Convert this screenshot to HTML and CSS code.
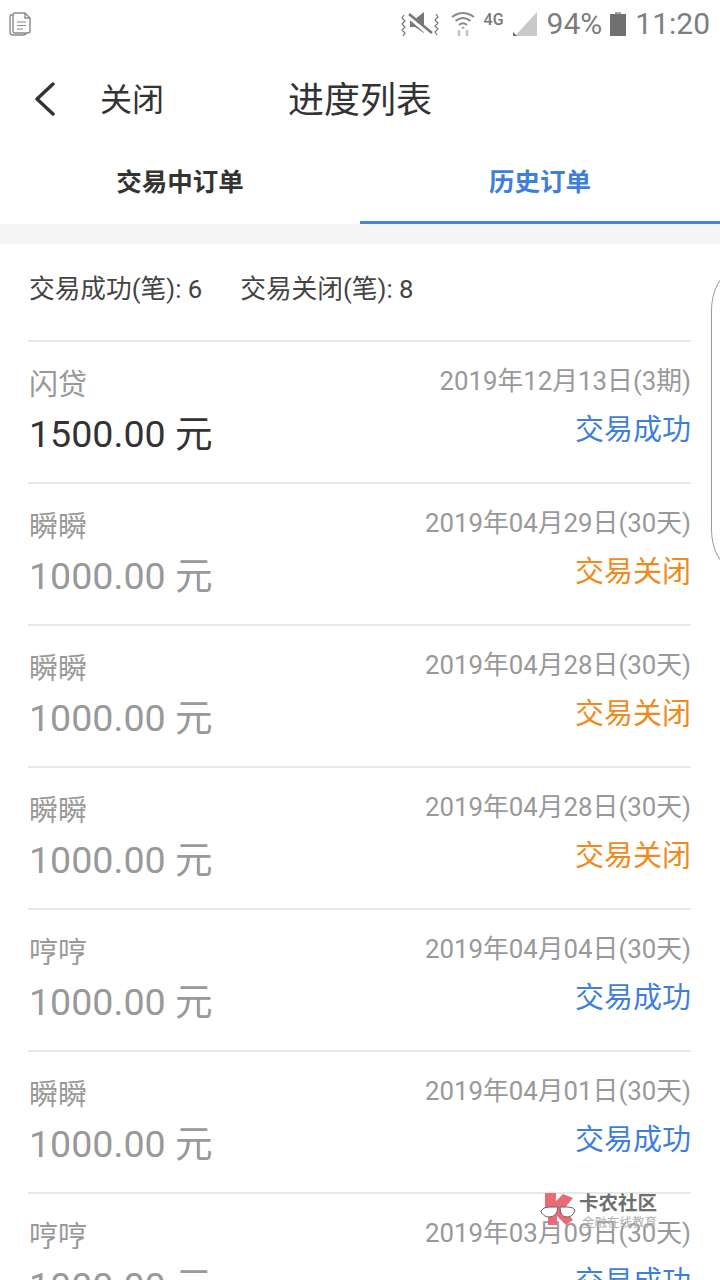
FILE: index.html
```html
<!DOCTYPE html>
<html lang="zh-CN">
<head>
    <meta charset="UTF-8">
    <meta name="viewport" content="width=device-width, initial-scale=1.0">
    <title>进度列表</title>
    <link rel="stylesheet" href="styles.css">
</head>
<body>
    <!-- Status bar -->
    <div class="status-bar">
        <svg class="doc-icon" width="26" height="28" viewBox="0 0 26 28" fill="none" stroke="#8a8a8a" stroke-width="1.4">
            <path d="M5 5 H3.5 Q2 5 2 6.5 V22 Q2 25 5 25 H15 Q18 25 18 23"/>
            <path d="M7 3 H17 L22 8 V21 Q22 23 20 23 H7 Q5 23 5 21 V5 Q5 3 7 3 Z" fill="#fff"/>
            <path d="M17 3 V8 H22"/>
            <path d="M9 12 H18 M9 15.5 H18 M9 19 H15" stroke-width="1"/>
        </svg>
        <div class="status-right">
            <svg width="38" height="26" viewBox="0 0 38 26" fill="none">
                <path d="M3 4 L1 7 L4 10 L1 13 L4 16 L1 19 L4 22 L2 25 M35 3 L37 6 L34 9 L37 12 L34 15 L37 18 L34 21 L36 24" stroke="#777" stroke-width="1.2"/>
                <path d="M9 8 H14 L23 1 V22 L14 16 H9 Z" fill="#777"/>
                <path d="M7 4 L30 24" stroke="#fff" stroke-width="5"/>
                <path d="M8 3 L31 22" stroke="#777" stroke-width="2.6"/>
            </svg>
            <svg class="wifi" width="24" height="26" viewBox="0 0 24 26" fill="none" stroke="#8a8a8a" stroke-width="2">
                <path d="M1 6 Q12 -2 23 6 M4.500 10 Q12 4 19.500 10 M8 14 Q12 10.500 16 14"/>
                <path d="M12 15.500 L14 17.500 H10 Z" fill="#8a8a8a" stroke="none"/>
                <path d="M8 19 V25 M16 25 V19" stroke="#c4c4c4" stroke-width="2.500"/>
            </svg>
            <span class="net-label">4G</span>
            <svg class="signal" width="26" height="26" viewBox="0 0 26 26">
                <path d="M25 1 V25 H3 Z" fill="#c9c9c9"/>
                <path d="M1 21 L5 25 H1 Z" fill="#666"/>
            </svg>
            <span class="status-text">94%</span>
            <svg class="battery" width="16" height="26" viewBox="0 0 16 26">
                <path d="M5 1 H11 V3 H5 Z" fill="#a8a8a8"/>
                <path d="M0 3 H16 V25 H0 Z" fill="#707070"/>
            </svg>
            <span class="status-text time">11:20</span>
        </div>
    </div>

    <!-- Nav -->
    <header class="nav-bar">
        <svg class="back-icon" width="22" height="34" viewBox="0 0 22 34" fill="none" stroke="#333" stroke-width="3.400" stroke-linecap="round" stroke-linejoin="round">
            <path d="M19 2 L3 17 L19 32"/>
        </svg>
        <span class="nav-close">关闭</span>
        <h1 class="nav-title">进度列表</h1>
    </header>

    <!-- Tabs -->
    <div class="tabs">
        <div class="tab">交易中订单</div>
        <div class="tab active">历史订单</div>
    </div>
    <div class="band"></div>

    <!-- List -->
    <main class="content">
        <div class="summary">
            <span>交易成功(笔): 6</span>
            <span>交易关闭(笔): 8</span>
        </div>

        <div class="order highlight">
            <div class="order-line"><span class="order-name">闪贷</span><span class="order-date">2019年12月13日(3期)</span></div>
            <div class="order-line"><span class="order-amount">1500.00 元</span><span class="order-status ok">交易成功</span></div>
        </div>
        <div class="order">
            <div class="order-line"><span class="order-name">瞬瞬</span><span class="order-date">2019年04月29日(30天)</span></div>
            <div class="order-line"><span class="order-amount">1000.00 元</span><span class="order-status closed">交易关闭</span></div>
        </div>
        <div class="order">
            <div class="order-line"><span class="order-name">瞬瞬</span><span class="order-date">2019年04月28日(30天)</span></div>
            <div class="order-line"><span class="order-amount">1000.00 元</span><span class="order-status closed">交易关闭</span></div>
        </div>
        <div class="order">
            <div class="order-line"><span class="order-name">瞬瞬</span><span class="order-date">2019年04月28日(30天)</span></div>
            <div class="order-line"><span class="order-amount">1000.00 元</span><span class="order-status closed">交易关闭</span></div>
        </div>
        <div class="order">
            <div class="order-line"><span class="order-name">哼哼</span><span class="order-date">2019年04月04日(30天)</span></div>
            <div class="order-line"><span class="order-amount">1000.00 元</span><span class="order-status ok">交易成功</span></div>
        </div>
        <div class="order">
            <div class="order-line"><span class="order-name">瞬瞬</span><span class="order-date">2019年04月01日(30天)</span></div>
            <div class="order-line"><span class="order-amount">1000.00 元</span><span class="order-status ok">交易成功</span></div>
        </div>
        <div class="order">
            <div class="order-line"><span class="order-name">哼哼</span><span class="order-date">2019年03月09日(30天)</span></div>
            <div class="order-line"><span class="order-amount">1000.00 元</span><span class="order-status ok">交易成功</span></div>
        </div>
    </main>

    <!-- Edge handle -->
    <div class="edge-panel"></div>

    <!-- Watermark -->
    <div class="watermark">
        <svg width="36" height="38" viewBox="0 0 36 38">
            <path d="M5 1 H16 V9 L23 2 L33 6 L24 17 L33 28 L26 33 L17 24 V33 H8 V20 H5 Z" fill="#ec6a75"/>
            <path d="M1 19 Q3 15 9 15 H18 Q17 25 9 25 Q3 25 1 19 Z" fill="#fff" stroke="#666" stroke-width="1"/>
            <path d="M20 15 H28 Q33 15 35 18 Q33 25 27 25 Q20 25 20 15 Z" fill="#fff" stroke="#666" stroke-width="1"/>
        </svg>
        <div class="watermark-text">
            <span class="watermark-name">卡农社区</span>
            <span class="watermark-sub">金融在线教育</span>
        </div>
    </div>
</body>
</html>
```

FILE: styles.css
```css
* {
    box-sizing: border-box;
}

html,
body {
    margin: 0;
    padding: 0;
}

body {
    width: 720px;
    height: 1280px;
    overflow: hidden;
    position: relative;
    background: #ffffff;
    color: #333333;
    font-family: Roboto, "Noto Sans CJK SC", sans-serif;
}

/* Status bar */
.status-bar {
    height: 48px;
    padding: 10px 10px 0 8px;
    display: flex;
    justify-content: space-between;
    align-items: flex-start;
}

.status-right {
    display: flex;
    align-items: center;
    height: 28px;
    color: #777777;
}

.wifi {
    margin-left: 12px;
}

.net-label {
    margin: -10px 0 0 9px;
    font-size: 16px;
    font-weight: 500;
    width: 27px;
}

.signal {
    margin-left: 1px;
}

.status-text {
    margin-left: 9px;
    font-size: 30px;
    line-height: 28px;
    color: #7d7d7d;
}

.battery {
    margin-left: 8px;
}

.time {
    margin-left: 9px;
}

/* Nav */
.nav-bar {
    height: 96px;
    display: flex;
    align-items: center;
    padding: 6px 0 0 34px;
    color: #333333;
}

.nav-close {
    margin-left: 44px;
    font-size: 32px;
    line-height: 40px;
    margin-top: 1px;
}

.nav-title {
    margin: 4px 0 0 124px;
    font-size: 36px;
    line-height: 40px;
    font-weight: 400;
}

/* Tabs */
.tabs {
    height: 80px;
    display: flex;
}

.tab {
    flex: 1;
    text-align: center;
    font-size: 25.500px;
    font-weight: 700;
    line-height: 76px;
    color: #333333;
}

.tab.active {
    color: #3f7fdc;
    border-bottom: 3px solid #4a82dd;
}

.band {
    height: 20px;
    background: #f5f5f5;
}

/* List */
.content {
    padding: 0 29px 0 28px;
}

.summary {
    height: 96px;
    display: flex;
    gap: 38px;
    padding: 27px 0 0 1px;
    font-size: 25.700px;
    line-height: 36px;
    color: #444444;
}

.order {
    height: 142px;
    border-top: 2px solid #e8e8e8;
    padding-top: 19px;
}

.order-line {
    display: flex;
    justify-content: space-between;
    align-items: flex-start;
}

.order-line + .order-line {
    margin-top: 3px;
}

.order-name {
    margin: 2px 0 -2px 1px;
    font-size: 29px;
    line-height: 44px;
    color: #999999;
}

.order-date {
    font-size: 25.800px;
    line-height: 40px;
    color: #999999;
}

.order-amount {
    margin-left: 1px;
    font-size: 37.600px;
    line-height: 52px;
    color: #999999;
}

.highlight .order-amount {
    color: #333333;
}

.order-status {
    font-size: 29px;
    line-height: 44px;
}

.order-status.ok {
    color: #3f7fdc;
}

.order-status.closed {
    color: #f08a1d;
}

/* Floating bits */
.edge-panel {
    position: absolute;
    top: 274px;
    left: 711px;
    width: 40px;
    height: 292px;
    border: 1.500px solid #9a9a9a;
    border-radius: 24px / 44px;
    background: #ffffff;
}

.watermark {
    position: absolute;
    left: 540px;
    top: 1192px;
    display: flex;
    gap: 3px;
}

.watermark-text {
    display: flex;
    flex-direction: column;
}

.watermark-name {
    font-size: 19.500px;
    line-height: 24px;
    font-weight: 700;
    color: #6f6f6f;
}

.watermark-sub {
    margin-left: 3px;
    font-size: 12.500px;
    line-height: 14px;
    color: #b0b0b0;
}
```
